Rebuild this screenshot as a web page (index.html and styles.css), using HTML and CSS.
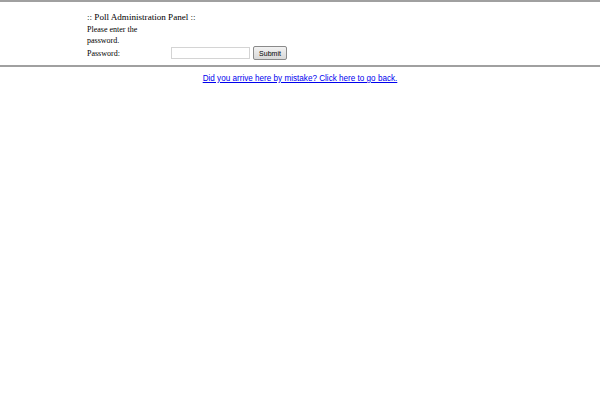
FILE: index.html
```html
<!DOCTYPE html>
<html>
<head>
<meta charset="utf-8">
<title>Poll Administration Panel</title>
<link rel="stylesheet" href="styles.css">
</head>
<body>
<div class="panel">
  <div class="inner">
    <div class="title">:: Poll Administration Panel ::</div>
    <div class="prompt">Please enter the<br>password.</div>
    <form class="row">
      <label class="label">Password:</label>
      <input class="pw" type="password">
      <button class="submit" type="button">Submit</button>
    </form>
  </div>
</div>
<div class="back"><a href="#">Did you arrive here by mistake? Click here to go back.</a></div>
</body>
</html>
```
FILE: styles.css
```css
html, body {
  margin: 0;
  padding: 0;
  background: #fff;
}
body {
  font-family: "Liberation Serif", serif;
  color: #000;
}
.panel {
  border-top: 2px solid #a0a0a0;
  border-bottom: 2px solid #a0a0a0;
  height: 67px;
  box-sizing: border-box;
}
.inner {
  padding-left: 87px;
  padding-top: 10px;
}
.title {
  font-size: 9.1px;
  line-height: 11px;
  height: 12px;
}
.prompt {
  font-size: 8px;
  line-height: 11px;
}
.row {
  display: flex;
  align-items: center;
  margin: 0;
  height: 14px;
  margin-top: 0;
}
.label {
  font-size: 8px;
  width: 84px;
}
.pw {
  box-sizing: border-box;
  width: 79px;
  height: 12px;
  border: 1px solid #d4d4d4;
  padding: 0;
  margin: 0;
  background: #fff;
}
.submit {
  box-sizing: border-box;
  margin-left: 3px;
  width: 34px;
  height: 14px;
  padding: 0;
  border: 1px solid #8a8a8a;
  border-radius: 2px;
  background: linear-gradient(#f2f2f2, #d8d8d8);
  font-family: "Liberation Sans", sans-serif;
  font-size: 7px;
  color: #000;
}
.back {
  text-align: center;
  font-family: "Liberation Sans", sans-serif;
  font-size: 8.15px;
  padding-top: 7px;
}
.back a {
  color: #0000ee;
  text-decoration: underline;
}
```
